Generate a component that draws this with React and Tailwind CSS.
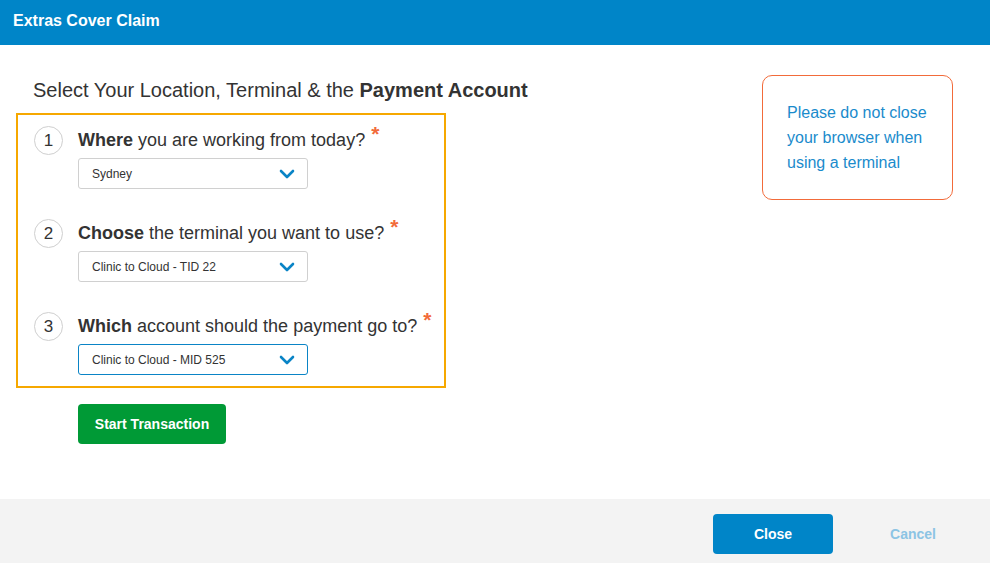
import React from 'react';

const Chevron = () => (
    <svg width="16" height="10" viewBox="0 0 16 10" fill="none">
        <path d="M2 2l6 6 6-6" stroke="#0a84c6" strokeWidth="2.6" strokeLinecap="round" strokeLinejoin="round" />
    </svg>
);

const Step = ({ num, bold, rest, value, active, mt }) => (
    <div className={`flex ${mt}`}>
        <div className="w-[29px] h-[29px] rounded-full border border-[#cfcfcf] flex items-center justify-center text-[17px] text-[#333] shrink-0 mt-[-1px]">
            {num}
        </div>
        <div className="ml-[15px]">
            <div className="text-[18px] leading-[24px] text-[#333] h-[24px]">
                <span className="font-bold">{bold}</span> {rest}
                <span className="text-[#f26b3a] text-[21px] font-bold relative top-[-5px] ml-[6px]">*</span>
            </div>
            <div
                className={`mt-[7px] w-[230px] h-[31px] rounded-[3px] border ${active ? 'border-[#0a84c6]' : 'border-[#d0d0d0]'} flex items-center justify-between pl-[13px] pr-[12px] text-[12px] text-[#333]`}
            >
                <span>{value}</span>
                <Chevron />
            </div>
        </div>
    </div>
);

export default function App() {
    return (
        <div className="w-[990px] h-[563px] bg-white flex flex-col font-['Liberation_Sans',Arial,sans-serif]">
            <div className="h-[45px] bg-[#0085c8] flex items-center px-[13px] pb-[4px] shrink-0">
                <span className="text-white font-bold text-[16px]">Extras Cover Claim</span>
            </div>

            <div className="flex-1 flex justify-between pr-[37px]">
                <div className="pl-[16px]">
                    <h2 className="mt-[33px] ml-[17px] text-[20px] leading-[24px] text-[#333]">
                        Select Your Location, Terminal &amp; the <span className="font-bold">Payment Account</span>
                    </h2>
                    <div className="mt-[11px] w-[430px] h-[275px] border-2 border-[#f6a800] pl-[16px] pt-[12px]">
                        <Step num="1" bold="Where" rest="you are working from today?" value="Sydney" mt="mt-0" />
                        <Step num="2" bold="Choose" rest="the terminal you want to use?" value="Clinic to Cloud - TID 22" mt="mt-[31px]" />
                        <Step num="3" bold="Which" rest="account should the payment go to?" value="Clinic to Cloud - MID 525" active mt="mt-[31px]" />
                    </div>
                    <button className="mt-[16px] ml-[62px] w-[148px] h-[40px] rounded-[4px] bg-[#009a36] text-white font-bold text-[14px]">
                        Start Transaction
                    </button>
                </div>

                <div className="mt-[30px] w-[191px] h-[125px] border border-[#f26b3a] rounded-[10px] pl-[24px] pt-[24px] text-[16px] leading-[25px] text-[#1a8bcc] self-start">
                    Please do not close<br />your browser when<br />using a terminal
                </div>
            </div>

            <div className="h-[64px] bg-[#f3f3f3] flex items-start justify-end pt-[15px] pr-[37px] shrink-0">
                <button className="w-[120px] h-[40px] rounded-[4px] bg-[#0085c8] text-white font-bold text-[14px]">
                    Close
                </button>
                <button className="ml-[40px] w-[80px] h-[40px] text-[#8cc4e4] font-bold text-[14px]">
                    Cancel
                </button>
            </div>
        </div>
    );
}
